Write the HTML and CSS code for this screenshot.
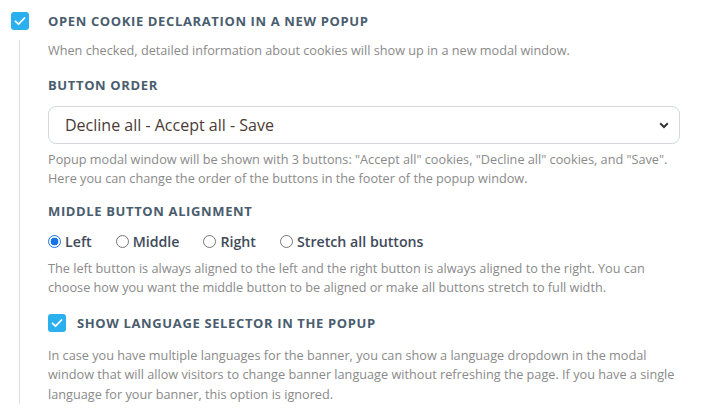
FILE: index.html
```html
<!DOCTYPE html>
<html>
<head>
<meta charset="utf-8">
<link rel="stylesheet" href="styles.css">
</head>
<body>
<div class="option">
  <div class="check-row top">
    <span class="cb"><svg viewBox="0 0 18 18" width="18" height="18"><path d="M4.5 9.3 L7.6 12.2 L13.5 6" fill="none" stroke="#fff" stroke-width="1.8" stroke-linecap="round" stroke-linejoin="round"/></svg></span>
    <span class="heading">OPEN COOKIE DECLARATION IN A NEW POPUP</span>
  </div>
  <div class="sub">
    <p class="desc first">When checked, detailed information about cookies will show up in a new modal window.</p>
    <div class="heading label">BUTTON ORDER</div>
    <div class="select">
      <span>Decline all - Accept all - Save</span>
      <svg class="chev" viewBox="0 0 10 7" width="10" height="7"><path d="M1.2 1.3 L5 5 L8.8 1.3" fill="none" stroke="#333" stroke-width="2"/></svg>
    </div>
    <p class="desc">Popup modal window will be shown with 3 buttons: "Accept all" cookies, "Decline all" cookies, and "Save".<br>Here you can change the order of the buttons in the footer of the popup window.</p>
    <div class="heading label l2">MIDDLE BUTTON ALIGNMENT</div>
    <div class="radios">
      <span class="radio"><span class="dot on"></span>Left</span>
      <span class="radio"><span class="dot"></span>Middle</span>
      <span class="radio"><span class="dot"></span>Right</span>
      <span class="radio"><span class="dot"></span>Stretch all buttons</span>
    </div>
    <p class="desc">The left button is always aligned to the left and the right button is always aligned to the right. You can<br>choose how you want the middle button to be aligned or make all buttons stretch to full width.</p>
    <div class="check-row inner">
      <span class="cb"><svg viewBox="0 0 18 18" width="18" height="18"><path d="M4.5 9.3 L7.6 12.2 L13.5 6" fill="none" stroke="#fff" stroke-width="1.8" stroke-linecap="round" stroke-linejoin="round"/></svg></span>
      <span class="heading">SHOW LANGUAGE SELECTOR IN THE POPUP</span>
    </div>
    <p class="desc last">In case you have multiple languages for the banner, you can show a language dropdown in the modal<br>window that will allow visitors to change banner language without refreshing the page. If you have a single<br>language for your banner, this option is ignored.</p>
  </div>
</div>
</body>
</html>
```

FILE: styles.css
```css
html, body {
  margin: 0;
  padding: 0;
  background: #fff;
  font-family: "Open Sans", "Noto Sans", sans-serif;
}
.option {
  padding-top: 12px;
}
.check-row {
  display: flex;
  align-items: center;
}
.check-row.top {
  padding-left: 11px;
  gap: 19px;
}
.check-row.inner {
  gap: 11px;
  margin-top: 16px;
}
.cb {
  width: 18px;
  height: 18px;
  border-radius: 3px;
  background: #2bb0ef;
  display: flex;
  flex-shrink: 0;
}
.heading {
  font-size: 13px;
  font-weight: 700;
  color: #4a5d6e;
  letter-spacing: 0.63px;
}
.sub {
  margin-left: 19px;
  border-left: 1px solid #dcdcdc;
  padding-left: 28px;
  margin-top: 10px;
}
.desc {
  margin: 0;
  font-size: 12.7px;
  line-height: 19.5px;
  color: #8a8a8a;
}
.desc.first {
  padding-top: 1px;
}
.label {
  margin-top: 14px;
  line-height: 20px;
}
.l2 {
  margin-top: 12px;
}
.select {
  margin-top: 11px;
  height: 36px;
  border: 1px solid #d4d8dd;
  border-radius: 8px;
  display: flex;
  align-items: center;
  justify-content: space-between;
  padding: 0 10px 0 16px;
  margin-right: 24px;
  margin-bottom: 6px;
  font-size: 16px;
  color: #4a3b36;
}
.chev {
  margin-top: 1px;
}
.radios {
  display: flex;
  gap: 24px;
  margin-top: 11px;
  margin-bottom: 7px;
  font-size: 14.2px;
  font-weight: 600;
  color: #3f4b5a;
  line-height: 20px;
}
.radio {
  display: flex;
  align-items: center;
  gap: 4px;
}
.dot {
  width: 11px;
  height: 11px;
  border: 1px solid #777;
  border-radius: 50%;
  box-sizing: content-box;
}
.dot.on {
  border: 1px solid #1a73e8;
  background: radial-gradient(circle, #1a73e8 0 3.6px, #fff 4.2px);
}
.desc.last {
  margin-top: 14px;
}
```
